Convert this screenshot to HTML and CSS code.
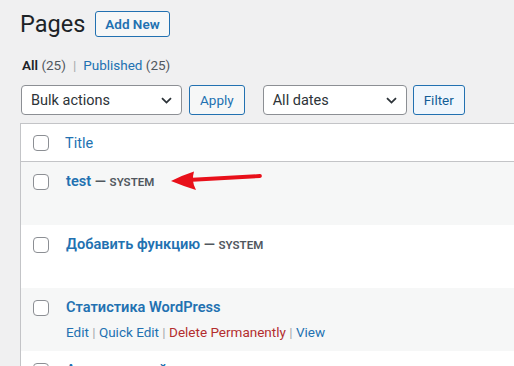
FILE: index.html
```html
<!DOCTYPE html>
<html lang="en">
<head>
<meta charset="utf-8">
<title>Pages</title>
<link rel="stylesheet" href="styles.css">
</head>
<body>
<div class="wrap">
  <div class="page-head">
    <h1 class="page-title">Pages</h1>
    <a class="btn-add" href="#">Add New</a>
  </div>

  <ul class="views">
    <li><span class="current">All</span>&nbsp;<span class="count">(25)</span></li>
    <li class="sep">|</li>
    <li><a href="#">Published</a>&nbsp;<span class="count">(25)</span></li>
  </ul>

  <div class="tablenav">
    <div class="select select-bulk">
      <span>Bulk actions</span>
      <svg class="chev" width="11" height="7" viewBox="0 0 11 7"><path d="M1 1.2 L5.5 5.6 L10 1.2" fill="none" stroke="#2c3338" stroke-width="1.8"/></svg>
    </div>
    <button class="btn btn-apply">Apply</button>
    <div class="select select-dates">
      <span>All dates</span>
      <svg class="chev" width="11" height="7" viewBox="0 0 11 7"><path d="M1 1.2 L5.5 5.6 L10 1.2" fill="none" stroke="#2c3338" stroke-width="1.8"/></svg>
    </div>
    <button class="btn btn-filter">Filter</button>
  </div>

  <div class="list">
    <div class="list-head">
      <div class="cb"><span class="checkbox"></span></div>
      <div class="col-title"><a href="#">Title</a></div>
    </div>

    <div class="row alt">
      <div class="cb"><span class="checkbox"></span></div>
      <div class="col-title">
        <div class="row-title"><a href="#">test</a> — <span class="state">SYSTEM</span></div>
      </div>
    </div>

    <div class="row">
      <div class="cb"><span class="checkbox"></span></div>
      <div class="col-title">
        <div class="row-title"><a href="#">Добавить функцию</a> — <span class="state">SYSTEM</span></div>
      </div>
    </div>

    <div class="row alt">
      <div class="cb"><span class="checkbox"></span></div>
      <div class="col-title">
        <div class="row-title"><a href="#">Статистика WordPress</a></div>
        <div class="row-actions"><a href="#">Edit</a><span class="bar">&nbsp;|&nbsp;</span><a href="#">Quick Edit</a><span class="bar">&nbsp;|&nbsp;</span><a href="#" class="del">Delete Permanently</a><span class="bar">&nbsp;|&nbsp;</span><a href="#">View</a></div>
      </div>
    </div>

    <div class="row">
      <div class="cb"><span class="checkbox"></span></div>
      <div class="col-title">
        <div class="row-title"><a href="#">Архив записей</a></div>
      </div>
    </div>
  </div>
</div>

<svg class="arrow" width="514" height="366" viewBox="0 0 514 366">
  <path d="M188 180 L260 176" stroke="#e8101a" stroke-width="3.8" stroke-linecap="round" fill="none"/>
  <path d="M171 181 Q183 175 194 171.5 Q191 181 196 190 Q183 186 171 181 Z" fill="#e8101a"/>
</svg>
</body>
</html>
```

FILE: styles.css
```css
html, body {
  margin: 0;
  padding: 0;
  overflow: hidden;
}

body {
  position: relative;
  width: 514px;
  height: 366px;
  background: #f0f0f1;
  color: #3c434a;
  font-family: Roboto, "Liberation Sans", sans-serif;
  font-size: 13.5px;
}

a {
  color: #2271b1;
  text-decoration: none;
}

.wrap {
  padding-left: 20px;
  width: 640px;
}

/* heading */
.page-head {
  display: flex;
  align-items: center;
  padding: 9px 0 4px;
}

.page-title {
  margin: 0;
  font-size: 23.5px;
  font-weight: 400;
  line-height: 30px;
  color: #1d2327;
}

.btn-add {
  margin-left: 10px;
  height: 24px;
  line-height: 24px;
  padding: 0 9px;
  border: 1px solid #2271b1;
  border-radius: 3px;
  background: #f6f7f7;
  font-size: 13.5px;
  font-weight: 600;
}

/* views */
.views {
  list-style: none;
  margin: 9px 0 0;
  padding: 0 0 0 2px;
  display: flex;
  line-height: 26px;
  color: #50575e;
}

.views li {
  white-space: nowrap;
}

.views .current {
  color: #1d2327;
  font-weight: 600;
}

.views .sep {
  color: #a7aaad;
  padding: 0 7px 0 7px;
}

/* table nav */
.tablenav {
  display: flex;
  align-items: center;
  height: 30px;
  margin: 7px 0 8px 1px;
}

.select {
  box-sizing: border-box;
  height: 30px;
  border: 1px solid #8c8f94;
  border-radius: 4px;
  background: #fff;
  color: #2c3338;
  font-size: 14.5px;
  display: flex;
  align-items: center;
  justify-content: space-between;
  padding: 0 9px 0 9px;
}

.select-bulk { width: 161px; }
.select-dates { width: 144px; margin-left: 18px; }

.btn {
  box-sizing: border-box;
  height: 30px;
  padding: 0 10px;
  border: 1px solid #2271b1;
  border-radius: 3px;
  background: #f6f7f7;
  color: #2271b1;
  font-family: inherit;
  font-size: 13.5px;
}

.btn-apply { margin-left: 7px; }
.btn-filter { margin-left: 6px; background: #f0f6fc; color: #135e96; }

/* list */
.list {
  border: 1px solid #c3c4c7;
  border-right: 0;
  background: #fff;
}

.list-head {
  display: flex;
  align-items: center;
  height: 38px;
  padding-top: 1px;
  box-sizing: border-box;
  border-bottom: 1px solid #c3c4c7;
  font-size: 14.5px;
}

.cb {
  width: 44px;
  flex: none;
  display: flex;
  padding-left: 12px;
  box-sizing: border-box;
}

.checkbox {
  width: 16px;
  height: 16px;
  box-sizing: border-box;
  border: 1px solid #8c8f94;
  border-radius: 4px;
  background: #fff;
}

.row {
  display: flex;
  align-items: flex-start;
  height: 63px;
  box-sizing: border-box;
  background: #fff;
}

.row.alt {
  background: #f6f7f7;
}

.row .cb {
  padding-top: 12px;
}

.row .col-title {
  padding-top: 9px;
  padding-left: 1px;
}

.row-title {
  font-size: 14.6px;
  font-weight: 600;
  line-height: 20px;
  color: #50575e;
}

.state {
  font-size: 11.5px;
}

.row-actions {
  margin-top: 5px;
  line-height: 20px;
  font-size: 13.5px;
  white-space: nowrap;
}

.row-actions .bar {
  color: #a7aaad;
}

.row-actions .del {
  color: #b32d2e;
}

/* annotation arrow */
.arrow {
  position: absolute;
  left: 0;
  top: 0;
  pointer-events: none;
}
```
